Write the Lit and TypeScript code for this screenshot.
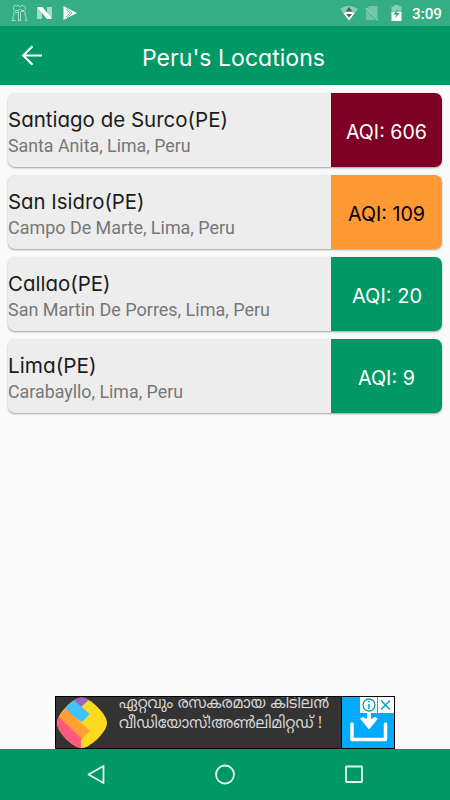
import { LitElement, html, css, svg } from "lit";
import { customElement, property } from "lit/decorators.js";

/** One line of text set to an exact advance width. */
@customElement("fit-text")
class FitText extends LitElement {
  @property() text = "";
  @property({ type: Number }) width = 100;
  @property({ type: Number }) height = 24;
  @property({ type: Number }) baseline = 18;
  static styles = css`
    :host { display: block; }
    svg { display: block; overflow: visible; }
    text { fill: currentColor; white-space: pre; }
  `;
  render() {
    return html`<svg width=${this.width} height=${this.height}>
      ${svg`<text x="0" y=${this.baseline} textLength=${this.width} lengthAdjust="spacingAndGlyphs">${this.text}</text>`}
    </svg>`;
  }
}

interface Place {
  name: string;
  nameWidth: number;
  area: string;
  areaWidth: number;
  aqi: number;
  aqiWidth: number;
  tone: string;
}

const PLACES: Place[] = [
  { name: "Santiago de Surco(PE)", nameWidth: 220, area: "Santa Anita, Lima, Peru", areaWidth: 182.5, aqi: 606, aqiWidth: 81, tone: "maroon" },
  { name: "San Isidro(PE)", nameWidth: 136.5, area: "Campo De Marte, Lima, Peru", areaWidth: 227, aqi: 109, aqiWidth: 77, tone: "orange" },
  { name: "Callao(PE)", nameWidth: 102.5, area: "San Martin De Porres, Lima, Peru", areaWidth: 262, aqi: 20, aqiWidth: 70, tone: "green" },
  { name: "Lima(PE)", nameWidth: 88.5, area: "Carabayllo, Lima, Peru", areaWidth: 175, aqi: 9, aqiWidth: 57, tone: "green" },
];

@customElement("app-root")
class AppRoot extends LitElement {
  static styles = css`
    :host {
      display: flex; flex-direction: column; width: 450px; height: 800px;
      background: #fafafa; overflow: hidden; font-family: Roboto, sans-serif;
    }
    svg { display: block; }
    .status { height: 26px; flex: none; background: #35ae86; display: flex; color: #fff; }
    .clock { font-size: 15px; font-weight: 500; }
    .bar { height: 59px; flex: none; background: #009966; color: #fff; display: flex; }
    .back { margin: 18px 0 0 21px; width: 22px; }
    .round { font-family: Inter, sans-serif; font-feature-settings: "cv11", "ss03"; }
    .title { font-size: 22.5px; font-weight: 400; margin: 15px 0 0 99px; }
    .list { flex: 1; display: flex; flex-direction: column; gap: 8px; padding: 8px 8px 0; }
    .card {
      height: 74px; display: flex; border-radius: 7px; overflow: hidden;
      background: #ededed; box-shadow: 0 1px 2px rgba(0, 0, 0, 0.36);
    }
    .info { width: 323px; padding-top: 15px; box-sizing: border-box; }
    .name { font-size: 20.5px; font-weight: 400; color: #1c1c1c; }
    .area { font-size: 18px; color: #777; }
    .aqi {
      flex: 1; display: flex; justify-content: center; padding-top: 27px;
      box-sizing: border-box; font-size: 20px; font-weight: 400; color: #fff;
    }
    .maroon { background: #7e0023; }
    .orange { background: #ff9933; color: #000; }
    .green { background: #009966; }
    .ad {
      width: 340px; height: 53px; flex: none; margin: 0 auto; box-sizing: border-box;
      border: 1px solid #000; background: #333; display: flex; overflow: hidden;
    }
    .logo { width: 63px; }
    .copy {
      width: 222px; color: #d8d8d8; font-size: 16px; border-right: 1px solid #000;
      font-family: "Noto Sans Malayalam", Manjari, Rachana, "Noto Sans", sans-serif;
    }
    .nav { height: 51px; flex: none; background: #009966; }
  `;

  render() {
    return html`
      <div class="status">
        <svg width="412" height="26" viewBox="0 0 412 26">
          <g fill="none" stroke="#a4dbc8" stroke-width="1">
            <path d="M13.500 9V6.500L15 5l1.500 1L18 5l2 2 2-1.500 2 .5 1.500 1V9l-1.500 1.500h-3L19.500 9 18 10.500h-3zM14 11v4l-1 1.500V20M18.500 11v9M20.500 12v8M25 11v4l1 2v3M11.500 20.500h4M18 20.500h3M25 20.500h2.500M15 12.500h3M21 11.500h3" />
          </g>
          <path d="M37 8h5v11h-5zM47 7h5v11h-5z" fill="#a9dac9" />
          <path d="M37 7h5.500L52 19h-5z" fill="#fff" />
          <path d="M63.500 6 77 13 63.500 20z" fill="#fff" />
          <path d="m65.700 8.500 4.300 4.500-4.300 4.500M67 8.200l5 4.800-5 4.800" fill="none" stroke="#45b48f" stroke-width=".8" />
          <path d="M340 9Q349 2.500 358 9L349 20.500z" fill="#85cdb5" />
          <path d="M343.500 13.300Q349 9.500 354.500 13.300L349 20.500z" fill="#fff" />
          <path d="M345.500 11.500 349 7l3.500 4.500zM346 14h6l-3 3.500z" fill="#48645b" />
          <path d="M366 9.500 369.500 6h8v12.500zM366 10.500 375.500 20H366z" fill="#70c5a9" />
          <path d="m365.500 8 12.500 12.500" stroke="#8bd0b9" stroke-width="1.100" />
          <path d="M391.500 6.500h2.500V5h5v1.500h2.500V13h-10z" fill="#85cdb5" />
          <path d="M391.500 12h10v9h-10z" fill="#fff" />
          <path d="m398.500 9-5 5.500h3L395 18.500l4.500-5.500h-3z" fill="#279c76" />
        </svg>
        <fit-text class="clock" text="3:09" .width=${30} .height=${26} .baseline=${19}></fit-text>
      </div>
      <div class="bar">
        <svg class="back" width="22" height="22" viewBox="0 0 22 22">
          <path d="M21 11.500H2.500M11.500 2.200 2.200 11.500l9.300 9.300" fill="none" stroke="#fff" stroke-width="2.200" />
        </svg>
        <fit-text class="title round" text="Peru's Locations" .width=${183} .height=${28} .baseline=${24.500}></fit-text>
      </div>
      <div class="list">
        ${PLACES.map(
          (p) => html`<div class="card">
            <div class="info">
              <fit-text class="name round" .text=${p.name} .width=${p.nameWidth} .height=${24} .baseline=${19}></fit-text>
              <fit-text class="area" .text=${p.area} .width=${p.areaWidth} .height=${24} .baseline=${20}></fit-text>
            </div>
            <div class="aqi round ${p.tone}">
              <fit-text .text=${"AQI: " + p.aqi} .width=${p.aqiWidth} .height=${24} .baseline=${19}></fit-text>
            </div>
          </div>`
        )}
      </div>
      <div class="ad">
        <svg class="logo" width="63" height="51" viewBox="0 0 63 51">
          <defs><clipPath id="blob"><path d="M25.500 .5C34 .5 51 17 51 26S34 51 25.500 51 1 35 1 26 17 .5 25.500 .5z" /></clipPath></defs>
          <g clip-path="url(#blob)">
            <path d="M0 0h52v51H0z" fill="#ffda20" />
            <path d="M14 0h22L25 10z" fill="#9a62c2" />
            <path d="M15 1 34 17 26 25 8 14z" fill="#40c4ff" />
            <path d="M9 11 34 34 25 43 2 20z" fill="#ff9f34" />
            <path d="M0 17 33 49 25 53 0 40z" fill="#ff5a7d" />
            <path d="m25 43 4-4 6 12H25z" fill="#ffda20" />
          </g>
        </svg>
        <div class="copy">
          <fit-text text="ഏറ്റവും രസകരമായ കിടിലൻ" .width=${210} .height=${20} .baseline=${10.500}></fit-text>
          <fit-text text="വീഡിയോസ്!അൺലിമിറ്റഡ് !" .width=${203} .height=${22} .baseline=${10.500}></fit-text>
        </div>
        <svg width="52" height="51" viewBox="0 0 52 51">
          <path d="M0 0h52v51H0z" fill="#00aaff" />
          <path d="M10 27v15.500h33.500V27" fill="none" stroke="#fff" stroke-width="3.500" stroke-linecap="round" stroke-linejoin="round" />
          <path d="M27 14v10" stroke="#fff" stroke-width="4" />
          <path d="M18 21.500 21 20l6 3 6-3 3 1.500L27 32.500z" fill="#fff" />
          <path d="M18 0h34v16H18z" fill="#fff" />
          <path d="M35.500 0v16" stroke="#00aaff" />
          <g fill="none" stroke="#00a5c4" stroke-width="1.300">
            <circle cx="27" cy="8" r="6" /><path d="M27 7v5M27 4v1.500M39 3.500l9 9M48 3.500l-9 9" stroke-width="1.500" />
          </g>
        </svg>
      </div>
      <div class="nav">
        <svg width="450" height="51" viewBox="0 0 450 51" fill="none" stroke="#e5f5f0" stroke-width="1.800" stroke-linejoin="round">
          <path d="M88.500 25.500 103.500 17v17z" />
          <circle cx="225" cy="25.500" r="9" />
          <rect x="346" y="17.500" width="16" height="15.500" rx=".5" />
        </svg>
      </div>
    `;
  }
}
